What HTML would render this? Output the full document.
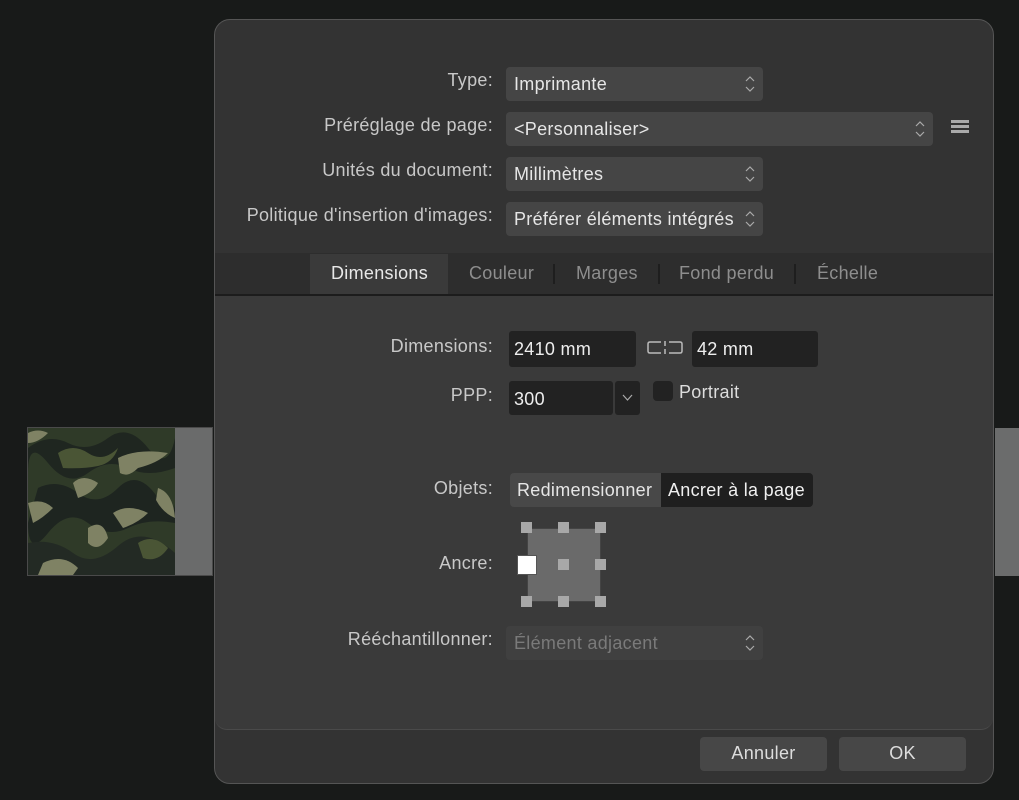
<!DOCTYPE html>
<html><head><meta charset="utf-8"><style>
*{margin:0;padding:0;box-sizing:border-box}
body{width:1019px;height:800px;background:#181a19;position:relative;overflow:hidden;font-family:"Liberation Sans",sans-serif;font-size:18px;letter-spacing:0.3px;color:#ddd}
.a{position:absolute}
.lbl{position:absolute;right:526px;color:#c8c8c8;text-align:right;white-space:nowrap}
.sel{position:absolute;background:#454545;border-radius:4px;height:34px;padding:7px 0 0 8px;color:#e6e6e6;white-space:nowrap}
.arr{position:absolute;right:8px;top:8px;width:10px;height:18px}
.inp{position:absolute;background:#222;border-radius:3px;height:36px;padding:8px 0 0 5px;color:#eee}
.tab{position:absolute;top:263px;color:#8e8e8e}
.sep{position:absolute;top:264px;width:2px;height:20px;background:#1e1e1e}
.h{position:absolute;width:11px;height:11px;background:#a8a8a8}
.btn{position:absolute;background:#474747;border-radius:4px;height:34px;top:737px;width:127px;text-align:center;padding-top:6px;color:#ddd}
</style></head><body>
<div class="a" style="left:27px;top:427px;width:186px;height:149px;background:#6a6b6b;border:1px solid #4a4a4a"></div>
<svg class="a" style="left:28px;top:428px" width="147" height="147" viewBox="0 0 147 147">
<rect width="147" height="147" fill="#2f3a28"/>
<path d="M0 20 Q20 5 40 15 T80 10 T120 20 T147 10 V40 Q120 50 100 40 T60 45 T20 35 T0 45Z" fill="#1f2620"/>
<path d="M10 60 Q30 50 50 65 T90 60 T130 70 T147 60 V95 Q120 90 100 100 T60 95 T20 105 T0 95Z" fill="#1e2520"/>
<path d="M0 115 Q25 110 45 125 T90 118 T147 125 V147 H0Z" fill="#232a24"/>
<path d="M30 25 Q45 15 60 25 T90 20 Q85 35 70 38 T35 40Z" fill="#4a5535"/>
<path d="M45 55 Q55 45 70 55 Q65 65 50 70Z" fill="#7f8264"/>
<path d="M90 30 Q110 20 140 25 Q130 35 110 40 Q100 50 92 45Z" fill="#7f8264"/>
<path d="M0 75 Q15 70 25 80 Q15 90 5 95Z" fill="#7f8264"/>
<path d="M85 85 Q100 75 120 85 Q110 95 95 100Z" fill="#7f8264"/>
<path d="M60 100 Q75 90 80 110 Q70 125 60 115Z" fill="#7f8264"/>
<path d="M130 60 Q145 65 147 90 Q135 85 128 72Z" fill="#7f8264"/>
<path d="M15 135 Q35 125 50 140 L45 147 H10Z" fill="#7f8264"/>
<path d="M0 5 Q10 0 20 5 Q10 15 0 15Z" fill="#7f8264"/>
<path d="M110 115 Q125 105 140 120 Q130 135 115 130Z" fill="#4a5535"/>
</svg>
<div class="a" style="left:995px;top:428px;width:24px;height:148px;background:#6b6c6c"></div>

<div class="a" style="left:214px;top:19px;width:780px;height:765px;background:#333;border:1px solid #555;border-radius:16px"></div>
<div class="a" style="left:215px;top:253px;width:778px;height:42px;background:#2d2d2d"></div>
<div class="a" style="left:215px;top:294px;width:778px;height:2px;background:#1c1c1c"></div>
<div class="a" style="left:215px;top:296px;width:778px;height:434px;background:#3a3a3a;border-bottom:1px solid #4a4a4a;border-radius:0 0 12px 12px"></div>
<div class="a" style="left:310px;top:254px;width:138px;height:40px;background:#3a3a3a"></div>

<div class="lbl" style="top:70px">Type:</div>
<div class="lbl" style="top:115px">Préréglage de page:</div>
<div class="lbl" style="top:160px">Unités du document:</div>
<div class="lbl" style="top:205px">Politique d'insertion d'images:</div>

<svg width="0" height="0" style="position:absolute"><defs><symbol id="ud" viewBox="0 0 10 18"><path d="M1 6 L5 2 L9 6 M1 12 L5 16 L9 12" fill="none" stroke="#aaa" stroke-width="1.2"/></symbol></defs></svg>
<div class="sel" style="left:506px;top:67px;width:257px">Imprimante<svg class="arr"><use href="#ud"/></svg></div>
<div class="sel" style="left:506px;top:112px;width:427px">&lt;Personnaliser&gt;<svg class="arr"><use href="#ud"/></svg></div>
<div class="sel" style="left:506px;top:157px;width:257px">Millimètres<svg class="arr"><use href="#ud"/></svg></div>
<div class="sel" style="left:506px;top:202px;width:257px">Préférer éléments intégrés<svg class="arr"><use href="#ud"/></svg></div>
<div class="a" style="left:951px;top:120px;width:18px;height:3px;background:#aaa;box-shadow:0 5px 0 #aaa,0 10px 0 #aaa"></div>

<div class="tab" style="left:331px;color:#e8e8e8">Dimensions</div>
<div class="tab" style="left:469px">Couleur</div>
<div class="sep" style="left:553px"></div>
<div class="tab" style="left:576px">Marges</div>
<div class="sep" style="left:658px"></div>
<div class="tab" style="left:679px">Fond perdu</div>
<div class="sep" style="left:794px"></div>
<div class="tab" style="left:817px">Échelle</div>

<div class="lbl" style="top:336px">Dimensions:</div>
<div class="inp" style="left:509px;top:331px;width:127px">2410 mm</div>
<svg class="a" style="left:647px;top:340px" width="36" height="16"><path d="M14 2 H3 Q1 2 1 4 V11 Q1 13 3 13 H14 M22 2 H33 Q35 2 35 4 V11 Q35 13 33 13 H22" fill="none" stroke="#bbb" stroke-width="1.5"/><path d="M18 1 V6 M18 9 V14" stroke="#bbb" stroke-width="1.5"/></svg>
<div class="inp" style="left:692px;top:331px;width:126px">42 mm</div>

<div class="lbl" style="top:385px">PPP:</div>
<div class="inp" style="left:509px;top:381px;width:104px;height:34px">300</div>
<div class="a" style="left:615px;top:381px;width:25px;height:34px;background:#222;border-radius:3px"><svg width="25" height="34"><path d="M8 14 L12.5 19 L17 14" fill="none" stroke="#aaa" stroke-width="1.2"/></svg></div>
<div class="a" style="left:653px;top:381px;width:20px;height:20px;background:#222;border-radius:4px"></div>
<div class="a" style="left:679px;top:382px;color:#ddd">Portrait</div>

<div class="lbl" style="top:478px">Objets:</div>
<div class="a" style="left:510px;top:473px;width:151px;height:34px;background:#484848;border-radius:4px 0 0 4px;padding:7px 0 0 7px;color:#e6e6e6;white-space:nowrap">Redimensionner</div>
<div class="a" style="left:661px;top:473px;width:152px;height:34px;background:#1f1f1f;border-radius:0 4px 4px 0;padding:7px 0 0 7px;color:#f0f0f0;white-space:nowrap">Ancrer à la page</div>

<div class="lbl" style="top:553px">Ancre:</div>
<div class="a" style="left:527px;top:528px;width:74px;height:74px;background:#6a6a6a;border:1px solid #444"></div>
<div class="h" style="left:521px;top:522px"></div><div class="h" style="left:558px;top:522px"></div><div class="h" style="left:595px;top:522px"></div>
<div class="h" style="left:558px;top:559px"></div><div class="h" style="left:595px;top:559px"></div>
<div class="h" style="left:521px;top:596px"></div><div class="h" style="left:558px;top:596px"></div><div class="h" style="left:595px;top:596px"></div>
<div class="a" style="left:517px;top:555px;width:20px;height:20px;background:#fff;border:1px solid #555"></div>

<div class="lbl" style="top:629px">Rééchantillonner:</div>
<div class="sel" style="left:506px;top:626px;width:257px;background:#404040;color:#7a7a7a">Élément adjacent<svg class="arr"><use href="#ud"/></svg></div>

<div class="btn" style="left:700px">Annuler</div>
<div class="btn" style="left:839px">OK</div>
</body></html>
